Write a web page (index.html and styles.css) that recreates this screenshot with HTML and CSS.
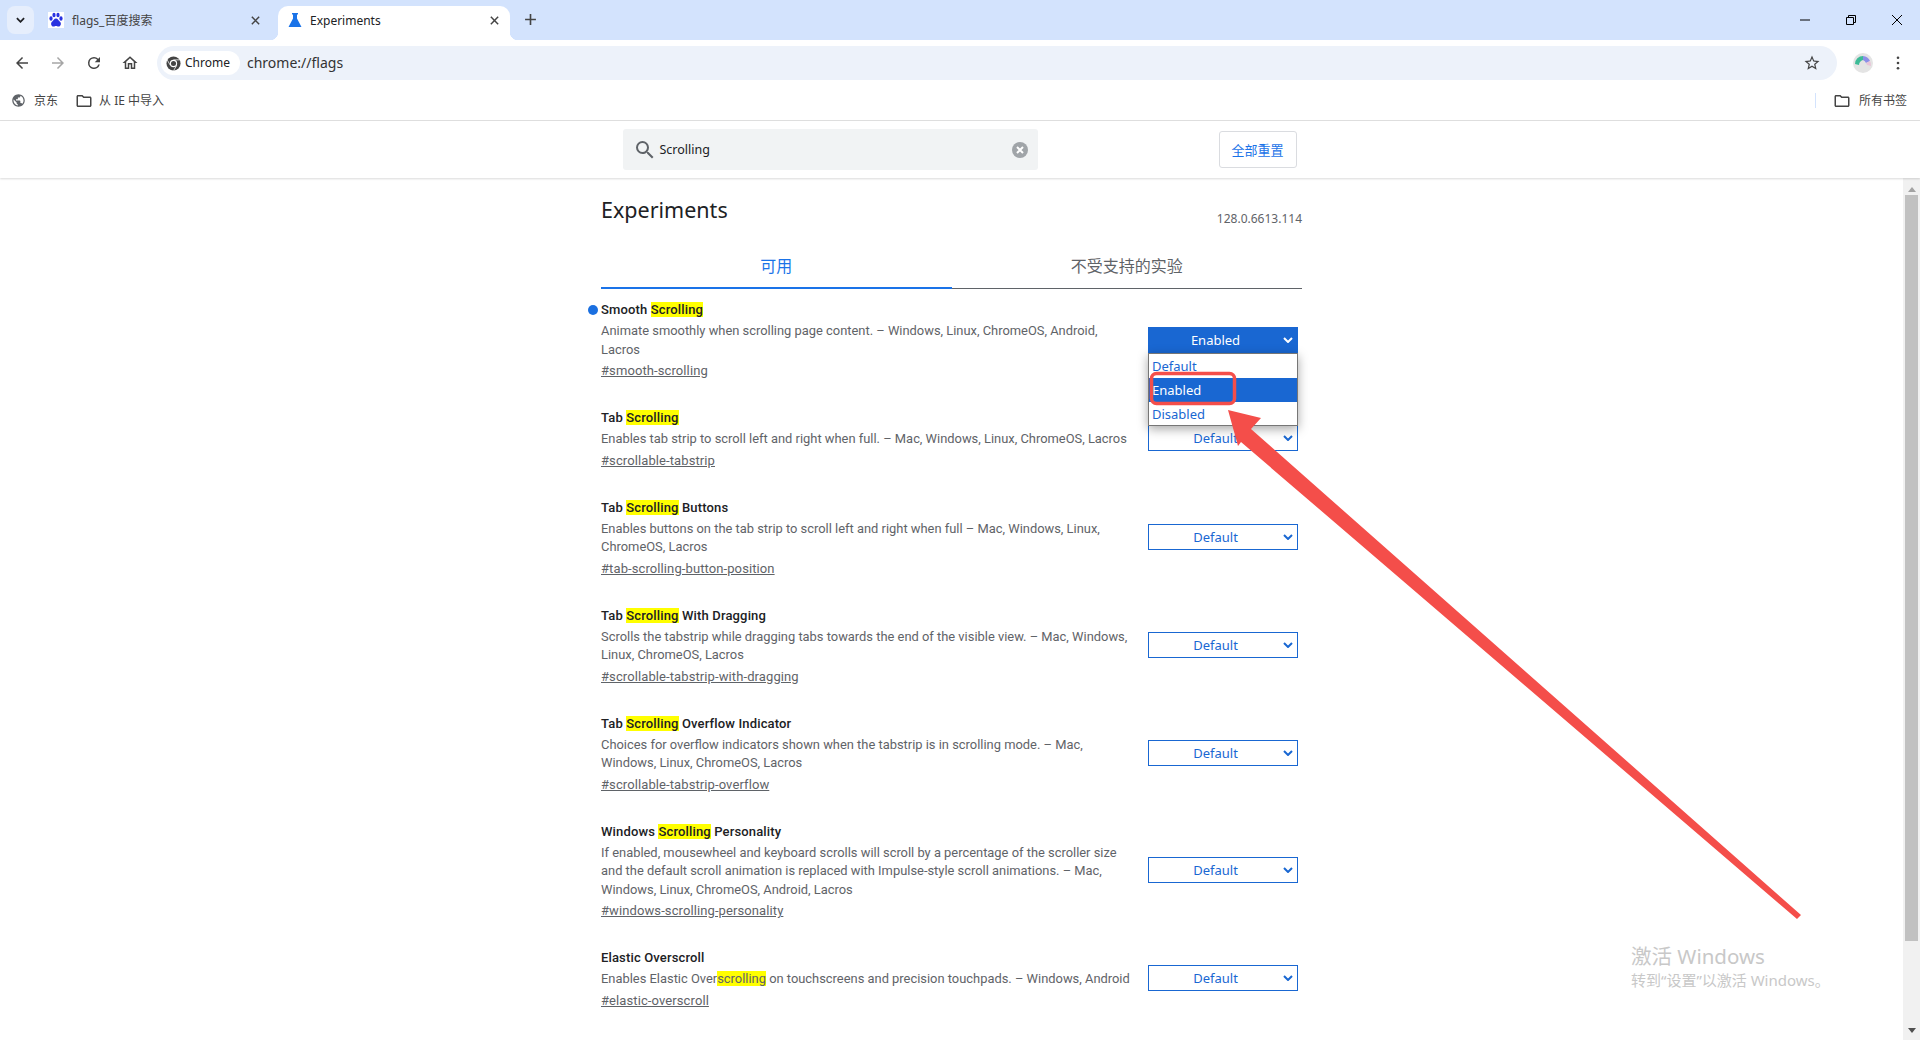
FILE: index.html
```html
<!DOCTYPE html>
<html lang="zh-CN">
  <head>
    <meta charset="utf-8"/>
    <title>Experiments</title>
    <link rel="stylesheet" href="styles.css">
  </head>

  <body>
    <svg class="defs" width="0" height="0">
      <symbol id="i-back" viewBox="0 0 24 24"><path d="M20 11H7.83l5.59-5.59L12 4l-8 8 8 8 1.41-1.41L7.83 13H20v-2z"/></symbol>
      <symbol id="i-reload" viewBox="0 0 24 24"><path d="M17.65 6.35A7.96 7.96 0 0 0 12 4a8 8 0 1 0 7.73 10h-2.08A6 6 0 1 1 12 6c1.66 0 3.14.69 4.22 1.78L13 11h7V4l-2.35 2.35z"/></symbol>
      <symbol id="i-home" viewBox="0 0 24 24"><path d="M12 5.69l5 4.5V18h-2v-6H9v6H7v-7.81l5-4.5M12 3L2 12h3v8h6v-6h2v6h6v-8h3L12 3z"/></symbol>
      <symbol id="i-star" viewBox="0 0 24 24"><path d="M22 9.24l-7.19-.62L12 2 9.19 8.63 2 9.24l5.46 4.73L5.82 21 12 17.27 18.18 21l-1.63-7.03L22 9.24zM12 15.4l-3.76 2.27 1-4.28-3.32-2.88 4.38-.38L12 6.1l1.71 4.04 4.38.38-3.32 2.88 1 4.28L12 15.4z"/></symbol>
      <symbol id="i-folder" viewBox="0 0 24 24"><path d="M20 6h-8l-2-2H4c-1.1 0-2 .9-2 2v12c0 1.1.9 2 2 2h16c1.1 0 2-.9 2-2V8c0-1.1-.9-2-2-2zm0 12H4V6h5.17l2 2H20v10z"/></symbol>
      <symbol id="i-globe" viewBox="0 0 24 24"><path d="M12 2C6.48 2 2 6.48 2 12s4.48 10 10 10 10-4.48 10-10S17.52 2 12 2zm-1 17.93c-3.95-.49-7-3.85-7-7.93 0-.62.08-1.21.21-1.79L9 15v1c0 1.1.9 2 2 2v1.93zm6.9-2.54c-.26-.81-1-1.39-1.9-1.39h-1v-3c0-.55-.45-1-1-1H8v-2h2c.55 0 1-.45 1-1V7h2c1.1 0 2-.9 2-2v-.41c2.93 1.19 5 4.06 5 7.41 0 2.08-.8 3.97-2.1 5.39z"/></symbol>
      <symbol id="i-search" viewBox="0 0 24 24"><path d="M15.5 14h-.79l-.28-.27A6.47 6.47 0 0 0 16 9.5 6.5 6.5 0 1 0 9.5 16c1.61 0 3.09-.59 4.23-1.57l.27.28v.79l5 4.99L20.49 19l-4.99-5zm-6 0C7.01 14 5 11.99 5 9.5S7.01 5 9.5 5 14 7.01 14 9.5 11.99 14 9.5 14z"/></symbol>
      <symbol id="i-close" viewBox="0 0 12 12"><path d="M2 2l8 8M10 2l-8 8" fill="none" stroke="currentColor" stroke-width="1.6"/></symbol>
      <symbol id="i-chev" viewBox="0 0 10 6"><path d="M1 1l4 4 4-4" fill="none" stroke="currentColor" stroke-width="2"/></symbol>
    </svg>

    <div class="tabstrip">
      <button class="tab-search"><svg class="chev-dark"><use href="#i-chev"/></svg></button>
      <div class="tab first">
        <svg class="favicon" viewBox="0 0 16 16">
          <rect width="16" height="16" fill="#fff"/>
          <g fill="#2932e1">
            <ellipse cx="3" cy="6.5" rx="1.6" ry="2.2"/>
            <ellipse cx="6" cy="3" rx="1.6" ry="2.3"/>
            <ellipse cx="10" cy="3" rx="1.6" ry="2.3"/>
            <ellipse cx="13" cy="6.5" rx="1.6" ry="2.2"/>
            <path d="M8 6.5c2 0 2.5 2 4 3.2 1.6 1.3 1 4.8-1.5 4.8-1.200 0-1.600-.5-2.500-.5s-1.300.5-2.500.5C3 14.500 2.400 11 4 9.700 5.500 8.500 6 6.500 8 6.500z"/>
          </g>
        </svg>
        <span class="tab-title">flags_百度搜索</span>
        <svg class="tab-close"><use href="#i-close"/></svg>
      </div>
      <div class="tab active">
        <svg class="favicon" viewBox="0 0 16 16"><path d="M5 1h6v1.500h-1v4l4.500 8.500h-13L6 6.500v-4H5z" fill="#1a73e8"/></svg>
        <span class="tab-title">Experiments</span>
        <svg class="tab-close"><use href="#i-close"/></svg>
      </div>
      <svg class="new-tab" viewBox="0 0 12 12"><path d="M6 1v10M1 6h10" fill="none" stroke="#444" stroke-width="1.500"/></svg>
      <div class="window-btns">
        <svg viewBox="0 0 12 12"><path d="M1 6h10" stroke="#000" fill="none"/></svg>
        <svg viewBox="0 0 12 12"><path d="M3.500 3.500V1.500h7v7h-2M1.500 3.500h7v7h-7z" stroke="#000" fill="none"/></svg>
        <svg viewBox="0 0 12 12"><path d="M1 1l10 10M11 1L1 11" stroke="#000" fill="none"/></svg>
      </div>
    </div>

    <div class="toolbar">
      <svg class="tool-icon"><use href="#i-back"/></svg>
      <svg class="tool-icon off"><use href="#i-back" transform="rotate(180 9 9)"/></svg>
      <svg class="tool-icon"><use href="#i-reload"/></svg>
      <svg class="tool-icon"><use href="#i-home"/></svg>
      <div class="omnibox">
        <div class="chip">
          <svg class="chrome-logo" viewBox="0 0 16 16">
            <circle cx="8" cy="8" r="7.500" fill="#444"/>
            <circle cx="8" cy="8" r="3.900" fill="#fff"/>
            <circle cx="8" cy="8" r="2.700" fill="#444"/>
            <path d="M8 4.100h6.500M4.600 10l-3.200-5.600M11.400 10l-3.300 5.600" stroke="#fff" stroke-width=".8"/>
          </svg>
          <span>Chrome</span>
        </div>
        <span class="url">chrome://flags</span>
        <svg class="star"><use href="#i-star"/></svg>
      </div>
      <svg class="avatar" viewBox="0 0 20 20">
        <circle cx="10" cy="10" r="10" fill="#e4e4e4"/>
        <path d="M2 11a8 8 0 0 1 8-8l1 4a5 5 0 0 0-5 5z" fill="#3dbb97"/>
        <path d="M10 3a8 8 0 0 1 7 5l-4 2a5 5 0 0 0-3-3z" fill="#8c8fe8"/>
        <path d="M17 8a8 8 0 0 1 1 5l-4-1-1-2z" fill="#e8c6d8"/>
      </svg>
      <svg class="dots" viewBox="0 0 4 16"><circle cx="2" cy="2" r="1.500"/><circle cx="2" cy="8" r="1.500"/><circle cx="2" cy="14" r="1.500"/></svg>
    </div>

    <div class="bookmarks">
      <div class="bm"><svg class="bm-globe"><use href="#i-globe"/></svg>京东</div>
      <div class="bm"><svg class="bm-folder"><use href="#i-folder"/></svg>从 IE 中导入</div>
      <div class="bm-sep"></div>
      <div class="bm all"><svg class="bm-folder"><use href="#i-folder"/></svg>所有书签</div>
    </div>

    <header class="flags-head">
      <div class="flags-head-in">
        <div class="search">
          <svg class="search-icon"><use href="#i-search"/></svg>
          <span class="search-text">Scrolling</span>
          <svg class="search-clear" viewBox="0 0 16 16">
            <circle cx="8" cy="8" r="8" fill="#a0a4a8"/>
            <path d="M5 5l6 6M11 5l-6 6" stroke="#fff" stroke-width="2"/>
          </svg>
        </div>
        <button class="reset">全部重置</button>
      </div>
    </header>

    <div class="viewport">
      <main class="page">
        <div class="page-in">
          <div class="title-row">
            <h1>Experiments</h1>
            <span class="version">128.0.6613.114</span>
          </div>
          <div class="tabs">
            <div class="flag-tab current">可用</div>
            <div class="flag-tab">不受支持的实验</div>
          </div>

          <section class="flag modified">
            <div class="flag-text">
              <h2>Smooth <mark>Scrolling</mark></h2>
              <p>Animate smoothly when scrolling page content. – Windows, Linux, ChromeOS, Android, Lacros</p>
              <a href="#">#smooth-scrolling</a>
            </div>
            <div class="select on">
              <span>Enabled</span><svg class="chev"><use href="#i-chev"/></svg>
              <ul class="menu">
                <li>Default</li>
                <li class="picked">Enabled</li>
                <li>Disabled</li>
              </ul>
            </div>
          </section>

          <section class="flag">
            <div class="flag-text">
              <h2>Tab <mark>Scrolling</mark></h2>
              <p>Enables tab strip to scroll left and right when full. – Mac, Windows, Linux, ChromeOS, Lacros</p>
              <a href="#">#scrollable-tabstrip</a>
            </div>
            <div class="select"><span>Default</span><svg class="chev"><use href="#i-chev"/></svg></div>
          </section>

          <section class="flag">
            <div class="flag-text">
              <h2>Tab <mark>Scrolling</mark> Buttons</h2>
              <p>Enables buttons on the tab strip to scroll left and right when full – Mac, Windows, Linux, ChromeOS, Lacros</p>
              <a href="#">#tab-scrolling-button-position</a>
            </div>
            <div class="select"><span>Default</span><svg class="chev"><use href="#i-chev"/></svg></div>
          </section>

          <section class="flag">
            <div class="flag-text">
              <h2>Tab <mark>Scrolling</mark> With Dragging</h2>
              <p>Scrolls the tabstrip while dragging tabs towards the end of the visible view. – Mac, Windows, Linux, ChromeOS, Lacros</p>
              <a href="#">#scrollable-tabstrip-with-dragging</a>
            </div>
            <div class="select"><span>Default</span><svg class="chev"><use href="#i-chev"/></svg></div>
          </section>

          <section class="flag">
            <div class="flag-text">
              <h2>Tab <mark>Scrolling</mark> Overflow Indicator</h2>
              <p>Choices for overflow indicators shown when the tabstrip is in scrolling mode. – Mac, Windows, Linux, ChromeOS, Lacros</p>
              <a href="#">#scrollable-tabstrip-overflow</a>
            </div>
            <div class="select"><span>Default</span><svg class="chev"><use href="#i-chev"/></svg></div>
          </section>

          <section class="flag">
            <div class="flag-text">
              <h2>Windows <mark>Scrolling</mark> Personality</h2>
              <p>If enabled, mousewheel and keyboard scrolls will scroll by a percentage of the scroller size and the default scroll animation is replaced with Impulse-style scroll animations. – Mac, Windows, Linux, ChromeOS, Android, Lacros</p>
              <a href="#">#windows-scrolling-personality</a>
            </div>
            <div class="select"><span>Default</span><svg class="chev"><use href="#i-chev"/></svg></div>
          </section>

          <section class="flag">
            <div class="flag-text">
              <h2>Elastic Overscroll</h2>
              <p>Enables Elastic Over<mark>scrolling</mark> on touchscreens and precision touchpads. – Windows, Android</p>
              <a href="#">#elastic-overscroll</a>
            </div>
            <div class="select"><span>Default</span><svg class="chev"><use href="#i-chev"/></svg></div>
          </section>
        </div>
      </main>
      <div class="scrollbar">
        <div class="sb-up"></div>
        <div class="sb-thumb"></div>
        <div class="sb-down"></div>
      </div>
    </div>

    <div class="watermark">
      <div class="wm-big">激活 Windows</div>
      <div class="wm-small">转到“设置”以激活 Windows。</div>
    </div>

    <svg class="notes" viewBox="0 0 1920 1040">
      <rect x="1151.500" y="373.500" width="83" height="30" rx="5" fill="none" stroke="#f44e4a" stroke-width="3.500"/>
      <path d="M1228 410L1261 418 1251 429 1801 915 1797 919 1241 442 1238 446z" fill="#f44e4a"/>
    </svg>
  </body>
</html>
```

FILE: styles.css
```css
* {
  box-sizing: border-box;
}

html, body {
  height: 100%;
}

body {
  margin: 0;
  display: flex;
  flex-direction: column;
  overflow: hidden;
  background-color: #fff;
  color: #202124;
  font: 13px / 18px "Noto Sans", "Noto Sans CJK SC", sans-serif;
}

.defs {
  position: absolute;
}

/* tab strip */
.tabstrip {
  height: 40px;
  flex: none;
  display: flex;
  padding: 6px 0 0 7px;
  background-color: #d3e3fd;
  font-size: 12px;
}

.tab-search {
  width: 27px;
  height: 28px;
  border: 0;
  padding: 0;
  border-radius: 8px;
  background-color: #e6eefc;
  display: flex;
  align-items: center;
  justify-content: center;
}

.chev-dark {
  width: 9px;
  height: 6px;
  color: #202124;
}

.tab {
  width: 232px;
  height: 34px;
  display: flex;
  align-items: center;
  padding: 0 10px 6px;
  color: #444;
  position: relative;
  border-radius: 10px 10px 0 0;
}

.tab.first {
  width: 238px;
  margin-left: 4px;
  padding-right: 15px;
}

.tab.active {
  margin-left: 2px;
  padding-left: 9px;
  background-color: #fff;
  color: #202124;
}

.tab.active .tab-title {
  margin-left: 7px;
}

.tab.active::before,
.tab.active::after {
  content: "";
  position: absolute;
  bottom: 0;
  width: 8px;
  height: 8px;
}

.tab.active::before {
  left: -8px;
  background: radial-gradient(circle at 0 0, transparent 8px, #fff 8.5px);
}

.tab.active::after {
  right: -8px;
  background: radial-gradient(circle at 100% 0, transparent 8px, #fff 8.5px);
}

.favicon {
  width: 16px;
  height: 16px;
  flex: none;
}

.tab-title {
  margin-left: 8px;
  padding-top: 2px;
  flex: 1;
}

.tab-close {
  width: 11px;
  height: 11px;
  color: #444;
}

.new-tab {
  width: 13px;
  height: 13px;
  margin: 7px 0 0 14px;
}

.window-btns {
  margin-left: auto;
  display: flex;
  gap: 34px;
  padding: 8px 17px 0 0;
}

.window-btns svg {
  width: 12px;
  height: 12px;
}

/* toolbar */
.toolbar {
  height: 40px;
  flex: none;
  display: flex;
  align-items: center;
  gap: 18px;
  padding: 6px 0 0 13px;
  background-color: #fff;
  border-radius: 8px 8px 0 0;
}

.tool-icon {
  width: 18px;
  height: 18px;
  fill: #444;
  flex: none;
}

.tool-icon.off {
  fill: #a6a6a6;
}

.omnibox {
  width: 1680px;
  height: 34px;
  display: flex;
  align-items: center;
  padding: 0 16px 0 4px;
  border-radius: 17px;
  background-color: #edf2fa;
}

.chip {
  height: 24px;
  width: 79px;
  padding: 0 0 0 5px;
  display: flex;
  align-items: center;
  gap: 4px;
  border-radius: 12px;
  background-color: #fff;
  font-size: 12px;
}

.chrome-logo {
  width: 15px;
  height: 15px;
}

.url {
  margin-left: 7px;
  font-size: 14px;
  color: #333;
}

.star {
  width: 18px;
  height: 18px;
  margin-left: auto;
  fill: #444;
}

.avatar {
  width: 20px;
  height: 20px;
  flex: none;
  margin-left: -2px;
}

.dots {
  width: 4px;
  height: 14px;
  flex: none;
  margin-left: 5px;
  fill: #444;
}

/* bookmarks bar */
.bookmarks {
  height: 41px;
  flex: none;
  display: flex;
  align-items: center;
  padding: 1px 13px 0 11px;
  border-bottom: 1px solid #e0e0e0;
  font-size: 12px;
  color: #444;
}

.bm {
  display: flex;
  align-items: center;
  margin-right: 17px;
}

.bm.all {
  margin-right: 0;
}

.bm.all .bm-folder {
  margin-right: 8px;
}

.bm-globe {
  width: 15px;
  height: 15px;
  margin-right: 8px;
  fill: #5f6368;
}

.bm-folder {
  width: 18px;
  height: 18px;
  margin-right: 6px;
  fill: #444;
}

.bm-sep {
  width: 1px;
  height: 15px;
  margin: 0 17px 0 auto;
  background-color: #d3e3fd;
}

/* flags header */
.flags-head {
  height: 57px;
  flex: none;
  position: relative;
  display: flex;
  justify-content: center;
  align-items: center;
  box-shadow: 0 1px 2px rgba(0, 0, 0, .15);
}

.flags-head-in {
  width: 674px;
  margin-right: 1px;
  display: flex;
  justify-content: space-between;
  align-items: center;
}

.search {
  width: 415px;
  height: 41px;
  display: flex;
  align-items: center;
  padding: 0 10px;
  border-radius: 3px;
  background-color: #f1f3f4;
}

.search-icon {
  width: 24px;
  height: 24px;
  fill: #5f6368;
}

.search-text {
  margin-left: 3px;
  flex: 1;
  font-size: 12.500px;
}

.search-clear {
  width: 16px;
  height: 16px;
}

.reset {
  width: 78px;
  height: 37px;
  padding: 0;
  border: 1px solid #dadce0;
  border-radius: 3px;
  background-color: #fff;
  color: #1a73e8;
  font: inherit;
}

/* experiments list */
.viewport {
  flex: 1;
  min-height: 0;
  display: flex;
}

.page {
  flex: 1;
  overflow: hidden;
}

.page-in {
  width: 701px;
  margin: 0 auto;
}

.title-row {
  height: 66px;
  display: flex;
  justify-content: space-between;
}

h1 {
  margin: 17px 0 0;
  font-size: 21.500px;
  font-weight: 400;
  line-height: 30px;
}

.version {
  margin-top: 32px;
  font-size: 12px;
  color: #5f6368;
}

.tabs {
  display: flex;
  height: 45px;
  margin-bottom: 12px;
}

.flag-tab {
  flex: 1;
  text-align: center;
  font-size: 16px;
  line-height: 44px;
  color: #5f6368;
  border-bottom: 1px solid #5f6368;
}

.flag-tab.current {
  color: #1a73e8;
  border-bottom: 2px solid #1a73e8;
}

.flag {
  display: flex;
  justify-content: space-between;
  align-items: center;
  padding-right: 4px;
  margin-bottom: 29px;
  position: relative;
  font-family: Roboto, "Noto Sans CJK SC", sans-serif;
}

.flag.modified::before {
  content: "";
  position: absolute;
  left: -13px;
  top: 4px;
  width: 10px;
  height: 10px;
  border-radius: 50%;
  background-color: #1a6fe0;
}

.flag-text {
  width: 534px;
}

h2 {
  margin: 0 0 3px;
  font-size: 13px;
  line-height: 18px;
  font-weight: 500;
  letter-spacing: .15px;
}

.flag-text p {
  margin: 0 0 3px;
  font-size: 12.900px;
  color: #5f6368;
  line-height: 18.500px;
}

.flag-text a {
  color: #5f6368;
  display: inline-block;
  letter-spacing: .1px;
}

mark {
  background-color: #ff0;
  color: inherit;
}

.select {
  width: 150px;
  height: 26px;
  flex: none;
  position: relative;
  display: flex;
  align-items: center;
  justify-content: center;
  padding-right: 15px;
  margin-top: -2px;
  border: 1px solid #1967d2;
  color: #1967d2;
  font-family: "Noto Sans", sans-serif;
}

.select.on {
  background-color: #1967d2;
  color: #fff;
}

.chev {
  position: absolute;
  right: 4px;
  top: 9px;
  width: 10px;
  height: 6px;
  color: inherit;
}

.menu {
  position: absolute;
  z-index: 2;
  top: 25px;
  left: -1px;
  width: 150px;
  height: 73px;
  margin: 0;
  padding: 0;
  list-style: none;
  border: 1px solid #767676;
  background-color: #fff;
  box-shadow: 0 3px 10px rgba(0, 0, 0, .35);
  color: #1967d2;
}

.menu li {
  height: 24px;
  padding: 3px 3px 0;
}

.menu li.picked {
  background-color: #1967d2;
  color: #fff;
}

/* scrollbar */
.scrollbar {
  width: 17px;
  flex: none;
  display: flex;
  flex-direction: column;
  align-items: center;
  background-color: #f1f1f1;
}

.sb-up,
.sb-down {
  width: 0;
  height: 0;
  border: 4px solid transparent;
}

.sb-up {
  margin-top: 5px;
  border-bottom: 5px solid #a3a3a3;
}

.sb-down {
  margin-top: auto;
  margin-bottom: 3px;
  border-top: 5px solid #505050;
}

.sb-thumb {
  width: 13px;
  height: 746px;
  margin-top: 3px;
  background-color: #c1c1c1;
}

/* things lying on top of the page */
.watermark {
  position: absolute;
  left: 1631px;
  top: 941px;
  color: #c8c8c8;
}

.wm-big {
  font-size: 20.500px;
  line-height: 30px;
}

.wm-small {
  font-size: 15px;
  line-height: 18px;
}

.notes {
  position: absolute;
  z-index: 3;
  left: 0;
  top: 0;
  width: 1920px;
  height: 1040px;
  pointer-events: none;
}
```
